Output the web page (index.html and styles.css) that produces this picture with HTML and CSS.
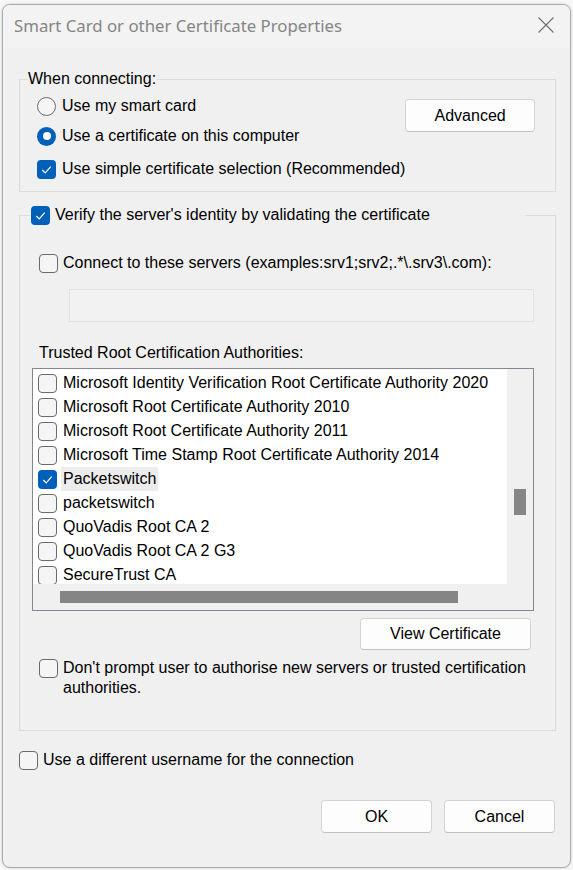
FILE: index.html
```html
<!DOCTYPE html>
<html>
<head>
<meta charset="utf-8">
<link rel="stylesheet" href="styles.css">
</head>
<body>
<div class="window">
  <div class="titlebar">
    <span class="title">Smart Card or other Certificate Properties</span>
    <svg class="close" width="16" height="16" viewBox="0 0 16 16"><path d="M0.5 0.5 L15.5 15.5 M15.5 0.5 L0.5 15.5" stroke="#6e6e6e" stroke-width="1.1" fill="none"/></svg>
  </div>
  <div class="content">
    <fieldset class="group g1">
      <legend class="legend1">When connecting:</legend>
      <div class="g1-body">
        <div class="options">
          <div class="opt r1"><span class="radio"></span><span>Use my smart card</span></div>
          <div class="opt r2"><span class="radio on"></span><span>Use a certificate on this computer</span></div>
          <div class="opt r3"><span class="cb on"><svg viewBox="0 0 18 18"><path d="M5 9.5 L7.8 12.3 L13 6.3" stroke="#fff" stroke-width="1.1" fill="none"/></svg></span><span>Use simple certificate selection (Recommended)</span></div>
        </div>
        <button class="btn adv">Advanced</button>
      </div>
    </fieldset>

    <fieldset class="group g2">
      <legend class="legend2"><span class="cb on"><svg viewBox="0 0 18 18"><path d="M5 9.5 L7.8 12.3 L13 6.3" stroke="#fff" stroke-width="1.1" fill="none"/></svg></span><span>Verify the server's identity by validating the certificate</span></legend>
      <div class="opt connect"><span class="cb"></span><span>Connect to these servers (examples:srv1;srv2;.*\.srv3\.com):</span></div>
      <div class="edit"></div>
      <div class="lbl trusted">Trusted Root Certification Authorities:</div>
      <div class="list">
        <div class="items">
          <div class="item"><span class="cb"></span><span class="txt">Microsoft Identity Verification Root Certificate Authority 2020</span></div>
          <div class="item"><span class="cb"></span><span class="txt">Microsoft Root Certificate Authority 2010</span></div>
          <div class="item"><span class="cb"></span><span class="txt">Microsoft Root Certificate Authority 2011</span></div>
          <div class="item"><span class="cb"></span><span class="txt">Microsoft Time Stamp Root Certificate Authority 2014</span></div>
          <div class="item"><span class="cb on"><svg viewBox="0 0 18 18"><path d="M5 9.5 L7.8 12.3 L13 6.3" stroke="#fff" stroke-width="1.1" fill="none"/></svg></span><span class="txt sel">Packetswitch</span></div>
          <div class="item"><span class="cb"></span><span class="txt">packetswitch</span></div>
          <div class="item"><span class="cb"></span><span class="txt">QuoVadis Root CA 2</span></div>
          <div class="item"><span class="cb"></span><span class="txt">QuoVadis Root CA 2 G3</span></div>
          <div class="item"><span class="cb"></span><span class="txt">SecureTrust CA</span></div>
        </div>
        <div class="vtrack"><div class="vthumb"></div></div>
        <div class="htrack"><div class="hthumb"></div></div>
        <div class="corner"></div>
      </div>
      <div class="viewrow"><button class="btn view">View Certificate</button></div>
      <div class="opt prompt"><span class="cb"></span><span class="ptext">Don't prompt user to authorise new servers or trusted certification authorities.</span></div>
    </fieldset>

    <div class="opt user"><span class="cb"></span><span>Use a different username for the connection</span></div>

    <div class="actions">
      <button class="btn ok">OK</button>
      <button class="btn cancel">Cancel</button>
    </div>
  </div>
</div>
</body>
</html>
```

FILE: styles.css
```css
html, body {
  margin: 0;
  padding: 0;
  background: #f7f7f7;
}
body {
  width: 573px;
  height: 870px;
  overflow: hidden;
  font-family: "Liberation Sans", Arial, sans-serif;
  font-size: 16px;
  color: #000;
}
.window {
  box-sizing: border-box;
  margin: 4px 0 0 2px;
  width: 569px;
  height: 864px;
  border: 1px solid #ababab;
  border-radius: 8px;
  background: #f0f0f0;
  overflow: hidden;
  box-shadow: 0 0 3px rgba(0,0,0,0.18);
}
.titlebar {
  height: 43px;
  background: #f3f3f3;
  display: flex;
  align-items: center;
  justify-content: space-between;
  padding: 0 16px 0 11px;
}
.title {
  font-family: "Noto Sans", "Open Sans", sans-serif;
  font-size: 16.8px;
  color: #858585;
  margin-top: -2px;
}
.close {
  display: block;
  margin-top: -4px;
}
.content {
  display: flex;
  flex-direction: column;
}
.group {
  margin: 0;
  padding: 0;
  border: 1px solid #dcdcdc;
  min-width: 0;
  width: 537px;
  box-sizing: border-box;
}
.g1 {
  margin: 22px 0 0 16px;
  padding: 0 0 12px 0;
}
.legend1 {
  margin-left: 7px;
  padding: 0 1px;
  line-height: 18px;
  height: 18px;
}
.g1-body {
  display: flex;
  justify-content: space-between;
  align-items: flex-start;
}
.options {
  padding-left: 17px;
  display: flex;
  flex-direction: column;
}
.opt {
  display: flex;
  align-items: center;
  height: 20px;
  line-height: 20px;
  white-space: nowrap;
}
.opt > .radio, .opt > .cb {
  margin-right: 6px;
}
.r1 { margin-top: 8px; }
.r2 { margin-top: 10px; }
.r3 { margin-top: 13px; }

.radio {
  box-sizing: border-box;
  width: 19px;
  height: 19px;
  border-radius: 50%;
  border: 1px solid #6a6a6a;
  background: #f5f5f5;
  flex: none;
  display: flex;
  align-items: center;
  justify-content: center;
}
.radio.on {
  border: none;
  background: #005fb8;
}
.radio.on::after {
  content: "";
  width: 8px;
  height: 8px;
  border-radius: 50%;
  background: #fff;
}
.cb {
  box-sizing: border-box;
  width: 19px;
  height: 19px;
  border-radius: 4px;
  border: 1px solid #6a6a6a;
  background: #f5f5f5;
  flex: none;
  display: block;
}
.cb.on {
  border: none;
  background: #005fb8;
}
.cb svg {
  display: block;
  width: 19px;
  height: 19px;
}

.btn {
  box-sizing: border-box;
  height: 33px;
  border: 1px solid #d3d3d3;
  border-bottom-color: #c2c2c2;
  border-radius: 4px;
  background: #fdfdfd;
  font-family: "Liberation Sans", Arial, sans-serif;
  font-size: 16px;
  color: #000;
  padding: 0;
}
.adv {
  width: 130px;
  margin: 11px 20px 0 0;
}

.g2 {
  margin: 13px 0 0 16px;
  padding: 0 0 32px 0;
}
.legend2 {
  margin-left: 10px;
  padding: 0 1px;
  width: 495px;
  box-sizing: border-box;
  height: 20px;
  display: flex;
  align-items: center;
  white-space: nowrap;
}
.legend2 .cb {
  margin-right: 5px;
}
.connect {
  margin-top: 28px;
  padding-left: 19px;
}
.connect .cb {
  margin-right: 5px;
}
.edit {
  box-sizing: border-box;
  margin: 16px 0 0 49px;
  width: 465px;
  height: 33px;
  border: 1px solid #e2e2e2;
  background: #f2f2f2;
}
.lbl {
  line-height: 18px;
}
.trusted {
  margin-top: 22px;
  padding-left: 19px;
}
.list {
  box-sizing: border-box;
  margin: 6px 0 0 12px;
  width: 502px;
  height: 243px;
  border: 1px solid #828790;
  display: grid;
  grid-template-columns: 474px 26px;
  grid-template-rows: 215px 26px;
}
.items {
  background: #fff;
  overflow: hidden;
  padding-top: 2px;
}
.item {
  height: 24px;
  display: flex;
  align-items: center;
  padding-left: 5px;
  white-space: nowrap;
}
.item .cb {
  margin-right: 4px;
}
.txt {
  padding: 0 2px;
  line-height: 24px;
}
.txt.sel {
  background: #ececec;
}
.vtrack {
  background: #f0f0f0;
  padding: 120px 0 0 7px;
}
.vthumb {
  width: 12px;
  height: 26px;
  background: #858585;
}
.htrack {
  background: #f0f0f0;
  padding: 7px 0 0 27px;
}
.hthumb {
  width: 398px;
  height: 12px;
  background: #858585;
}
.corner {
  background: #f0f0f0;
}
.viewrow {
  display: flex;
  justify-content: flex-end;
  margin-top: 7px;
  padding-right: 24px;
}
.view {
  width: 171px;
  height: 32px;
}
.prompt {
  margin-top: 8px;
  padding-left: 19px;
  height: auto;
  align-items: flex-start;
  white-space: normal;
}
.prompt .cb {
  margin-top: 1px;
  margin-right: 5px;
}
.ptext {
  line-height: 20px;
  width: 470px;
}
.user {
  margin-top: 19px;
  padding-left: 16px;
}
.user .cb {
  margin-right: 5px;
}
.actions {
  display: flex;
  justify-content: flex-end;
  gap: 12px;
  margin-top: 30px;
  padding-right: 15px;
}
.ok, .cancel {
  width: 111px;
  height: 33px;
}
```
